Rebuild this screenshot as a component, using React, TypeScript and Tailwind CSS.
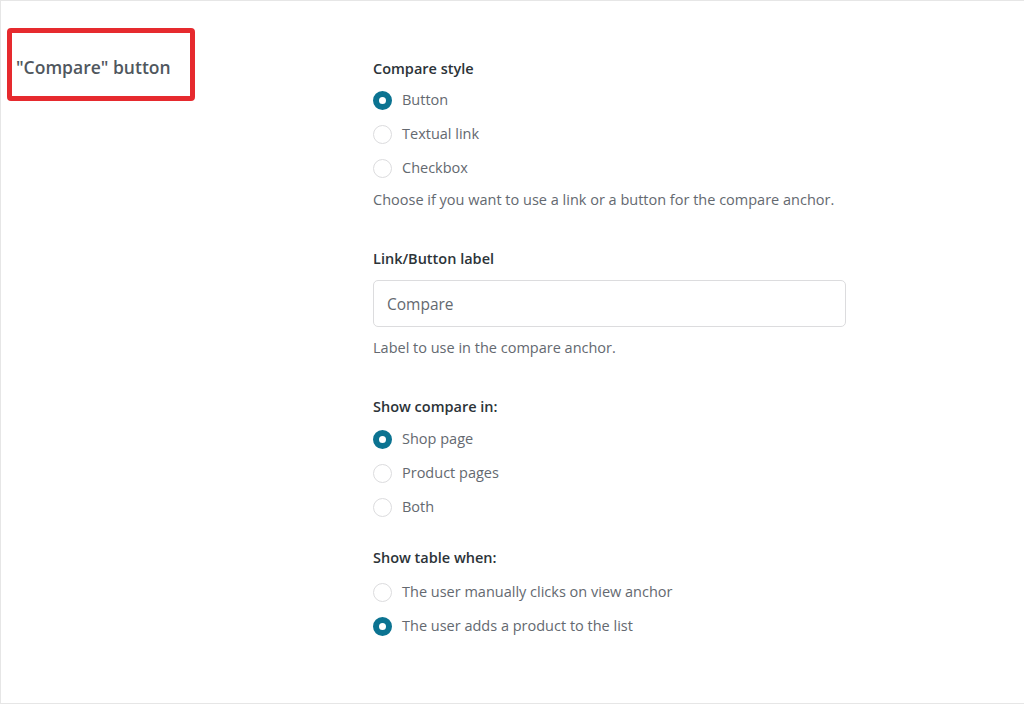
import { ReactNode } from "react";

function Radio({ checked, children }: { checked?: boolean; children: ReactNode }) {
  return (
    <label className="flex items-center h-[34px] text-[14.5px] text-[#646970]">
      <span
        className={
          checked
            ? "w-[19px] h-[19px] rounded-full border-[6px] border-[#0b7391] bg-white mr-[10px] shrink-0"
            : "w-[19px] h-[19px] rounded-full border border-[#dcdcde] bg-white mr-[10px] shrink-0"
        }
      />
      {children}
    </label>
  );
}

function Heading({ children }: { children: ReactNode }) {
  return <h3 className="text-[14.5px] font-semibold text-[#2c3338] leading-[20px]">{children}</h3>;
}

export default function App() {
  return (
    <div
      className="w-[1024px] h-[704px] bg-white border-t border-l border-b border-[#e6e6e6] flex"
      style={{ fontFamily: '"Open Sans", "Noto Sans", sans-serif' }}
    >
      {/* Section title */}
      <div className="w-[372px] shrink-0 pl-[6px] pt-[27px]">
        <div className="w-[188px] h-[73px] border-[5px] border-[#e62a2e] rounded-[4px] flex items-center pl-[4px] pt-[5px]">
          <span className="text-[17.5px] font-semibold text-[#50575e]">"Compare" button</span>
        </div>
      </div>

      {/* Options */}
      <div className="flex-1 pt-[58px]">
        <Heading>Compare style</Heading>
        <div className="mt-[4px]">
          <Radio checked>Button</Radio>
          <Radio>Textual link</Radio>
          <Radio>Checkbox</Radio>
        </div>
        <p className="text-[14.5px] text-[#646970] mt-[3px] leading-[24px]">
          Choose if you want to use a link or a button for the compare anchor.
        </p>

        <div className="mt-[37px]">
          <Heading>Link/Button label</Heading>
          <input
            readOnly
            value="Compare"
            className="mt-[11px] w-[473px] h-[47px] border border-[#dcdcde] rounded-[5px] px-[13px] text-[15.5px] text-[#646970] outline-none"
            style={{ fontFamily: '"Open Sans", "Noto Sans", sans-serif' }}
          />
          <p className="text-[14.5px] text-[#646970] mt-[9px] leading-[24px]">Label to use in the compare anchor.</p>
        </div>

        <div className="mt-[37px]">
          <Heading>Show compare in:</Heading>
          <div className="mt-[5px]">
            <Radio checked>Shop page</Radio>
            <Radio>Product pages</Radio>
            <Radio>Both</Radio>
          </div>
        </div>

        <div className="mt-[24px]">
          <Heading>Show table when:</Heading>
          <div className="mt-[7px]">
            <Radio>The user manually clicks on view anchor</Radio>
            <Radio checked>The user adds a product to the list</Radio>
          </div>
        </div>
      </div>
    </div>
  );
}
